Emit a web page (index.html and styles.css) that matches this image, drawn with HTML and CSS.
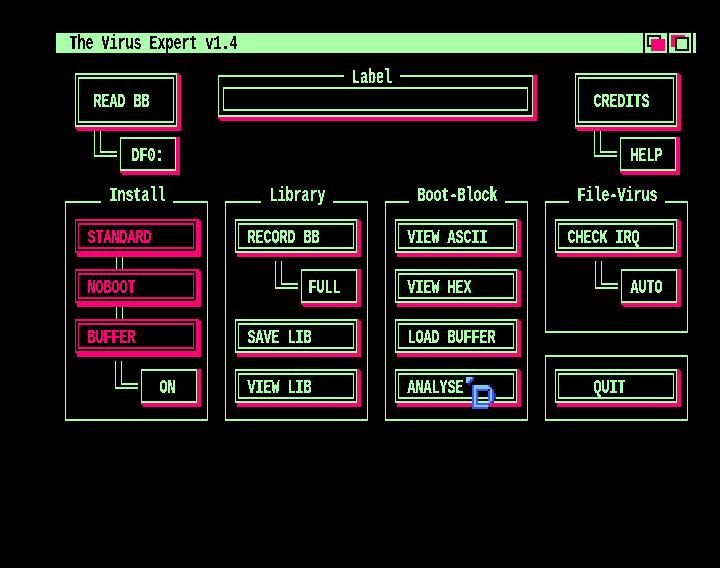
FILE: index.html
```html
<!DOCTYPE html>
<html lang="en">
<head>
<meta charset="utf-8">
<title>The Virus Expert v1.4</title>
<link rel="stylesheet" href="styles.css">
</head>
<body>
<svg class="defs" width="0" height="0" aria-hidden="true">
  <filter id="crisp" x="-5%" y="-50%" width="110%" height="200%">
    <feComponentTransfer><feFuncA type="discrete" tableValues="0 0 1 1 1"/></feComponentTransfer>
  </filter>
</svg>
<div class="screen">
  <header class="titlebar">
    <span class="text">The Virus Expert v1.4</span>
    <svg class="gadgets" width="53" height="20" viewBox="0 0 53 20" shape-rendering="crispEdges">
      <path fill="#000" d="M0 0h2v20H0zM24 0h2v20h-2zM48 0h2v20h-2z"/>
      <path fill="#000" fill-rule="evenodd" d="M4 2h14v12H4zM6 4v8h10V4z"/>
      <path fill="#ff0077" d="M8 6h14v12H8zM28 2h14v12H28z"/>
      <path fill="#000" d="M32 4h14v14H32z"/>
      <path fill="#aaffaa" d="M34 6h10v10H34z"/>
    </svg>
  </header>

  <section class="top">
    <div class="group">
      <div class="btn large"><div class="inner"><span class="text">READ BB</span></div></div>
      <div class="branch"><i class="elbow"></i><div class="small df"><span class="text">DF0:</span></div></div>
    </div>
    <div class="label">
      <div class="head"><i></i><span class="text">Label</span><i></i></div>
      <div class="field"></div>
    </div>
    <div class="group">
      <div class="btn large"><div class="inner"><span class="text">CREDITS</span></div></div>
      <div class="branch"><i class="elbow"></i><div class="small help"><span class="text">HELP</span></div></div>
    </div>
  </section>

  <main class="panels">
    <section class="panel">
      <div class="head"><i></i><span class="text">Install</span><i></i></div>
      <div class="row"><div class="btn off"><div class="inner"><span class="text">STANDARD</span></div></div><i class="link"></i></div>
      <div class="row"><div class="btn off"><div class="inner"><span class="text">NOBOOT</span></div></div><i class="link"></i></div>
      <div class="row"><div class="btn off"><div class="inner"><span class="text">BUFFER</span></div></div></div>
      <div class="row fork"><i class="elbow"></i><div class="small on"><span class="text">ON</span></div></div>
    </section>
    <section class="panel">
      <div class="head"><i></i><span class="text">Library</span><i></i></div>
      <div class="row"><div class="btn"><div class="inner"><span class="text">RECORD BB</span></div></div></div>
      <div class="row fork"><i class="elbow"></i><div class="small full"><span class="text">FULL</span></div></div>
      <div class="row"><div class="btn"><div class="inner"><span class="text">SAVE LIB</span></div></div></div>
      <div class="row"><div class="btn"><div class="inner"><span class="text">VIEW LIB</span></div></div></div>
    </section>
    <section class="panel wide">
      <div class="head"><i></i><span class="text">Boot-Block</span><i></i></div>
      <div class="row"><div class="btn"><div class="inner"><span class="text">VIEW ASCII</span></div></div></div>
      <div class="row"><div class="btn"><div class="inner"><span class="text">VIEW HEX</span></div></div></div>
      <div class="row"><div class="btn"><div class="inner"><span class="text">LOAD BUFFER</span></div></div></div>
      <div class="row"><div class="btn"><div class="inner"><span class="text">ANALYSE</span></div></div></div>
    </section>
    <div class="column">
      <section class="panel wide short">
        <div class="head"><i></i><span class="text">File-Virus</span><i></i></div>
        <div class="row"><div class="btn"><div class="inner"><span class="text">CHECK IRQ</span></div></div></div>
        <div class="row fork"><i class="elbow"></i><div class="small auto"><span class="text">AUTO</span></div></div>
      </section>
      <section class="panel exit">
        <div class="btn quit"><div class="inner"><span class="text">QUIT</span></div></div>
      </section>
    </div>
  </main>

  <svg class="pointer" width="30" height="32" viewBox="0 0 15 16" shape-rendering="crispEdges">
    <path fill="#77ccff" d="M0 0h3v1H0zM0 1h2v1H0zM0 2h1v1H0zM4 4h7v1H4zM4 5h7v1H4zM11 5h1v1h-1zM12 6h1v3h-1zM12 9h1v3h-1zM11 12h1v1h-1zM4 14h7v1H4zM4 6h1v8H4z"/>
    <path fill="#4455ff" d="M3 0h1v1H3zM2 1h1v1H2zM1 2h1v1H1zM3 4h1v12H3zM11 4h1v1h-1zM12 5h1v1h-1zM5 6h6v1H5zM5 7h1v6H5zM5 13h6v1H5zM11 7h1v5h-1zM13 7h1v5h-1zM12 12h1v2h-1zM4 15h7v1H4zM11 14h1v1h-1z"/>
    <path fill="#2233bb" d="M3 1h1v1H3zM2 2h1v1H2zM1 3h1v1H1zM13 6h1v1h-1zM14 8h1v3h-1zM13 12h1v1h-1z"/>
  </svg>
</div>
</body>
</html>
```

FILE: styles.css
```css
:root {
  --green: #aaffaa;
  --pink: #ff0077;
}

* { box-sizing: border-box; }

body {
  margin: 0;
  background: #000;
  color: var(--green);
  overflow: hidden;
}

.defs { position: absolute; }

.screen {
  position: relative;
  width: 720px;
  height: 568px;
  padding: 33px 24px 0 56px;
}

.text {
  display: block;
  flex: none;
  height: 14px;
  font: bold 13.33px/14px "Liberation Mono", monospace;
  white-space: pre;
  transform-origin: 0 10.5px;
  transform: translate(0.5px, 4.5px) scaleY(1.55);
  filter: url(#crisp);
}

.titlebar {
  display: flex;
  justify-content: space-between;
  height: 20px;
  padding: 2px 0 0 13px;
  background: var(--green);
  color: #000;
}

.gadgets { display: block; margin-top: -2px; }

.top {
  display: flex;
  height: 128px;
  padding: 20px 0 0 19px;
}

.group { width: 102px; }

.btn {
  width: 122px;
  height: 34px;
  padding: 2px;
  border: solid var(--green);
  border-width: 2px 1px;
  box-shadow: 2px 0 var(--pink), 2px 2px var(--pink), 3px 3px 0 1px var(--pink);
}

.btn .inner {
  height: 100%;
  padding: 4px 0 0 8px;
  border: solid var(--green);
  border-width: 2px 1px;
}

.btn.large {
  width: 102px;
  height: 54px;
  box-shadow: 1px 1px 0 1px var(--pink), 3px 3px 0 1px var(--pink);
}

.btn.large .inner { padding: 14px 0 0 14px; }

.btn.off,
.btn.off .inner { border-color: var(--pink); color: var(--pink); }

.btn.quit .inner { padding-left: 34px; }

.small {
  flex: none;
  width: 56px;
  height: 34px;
  padding-top: 8px;
  border: solid var(--green);
  border-width: 2px 1px;
  box-shadow: 2px 0 var(--pink), 4px 0 var(--pink), 0 2px var(--pink),
    2px 2px var(--pink), 2px 4px var(--pink), 4px 4px var(--pink);
}

.df { padding-left: 10px; }
.help { padding-left: 9px; }
.full { padding-left: 6px; }
.auto { padding-left: 8px; }
.on { padding-left: 17px; }

.elbow {
  flex: none;
  display: block;
  width: 23px;
  height: 28px;
  margin-right: 3px;
  border: solid var(--green);
  border-width: 0 0 2px 1px;
  padding: 0 0 4px 5px;
}

.elbow::before {
  content: "";
  display: block;
  height: 100%;
  border: solid var(--green);
  border-width: 0 0 2px 1px;
}

.branch { display: flex; padding: 4px 0 0 19px; }
.branch .elbow { height: 26px; }
.branch .small { margin-top: 6px; }

.head {
  display: flex;
  justify-content: space-between;
  height: 2px;
}

.head i { width: 36px; background: var(--green); }
.head .text { margin-top: -14px; }

.label {
  width: 315px;
  height: 42px;
  margin: 2px 42px 0 41px;
  padding: 0 4px;
  border: solid var(--green);
  border-width: 0 1px 2px;
  box-shadow: 2px 0 var(--pink), 4px 0 var(--pink), 0 2px var(--pink),
    2px 2px var(--pink), 2px 4px var(--pink), 4px 4px var(--pink);
}

.label .head { margin: 0 -5px; }
.label .head i { width: 126px; }
.label .head i:last-child { width: 133px; }
.label .head .text { margin: -6px 1px 0 0; }

.field {
  height: 24px;
  margin-top: 10px;
  border: solid var(--green);
  border-width: 2px 1px;
}

.panels {
  display: flex;
  gap: 17px;
  margin: 20px 0 0 9px;
}

.panel {
  width: 143px;
  height: 220px;
  padding-left: 9px;
  border: solid var(--green);
  border-width: 0 1px 2px;
}

.panel .head { margin: 0 -1px 16px -10px; }
.panel .head i { width: 36px; }
.panel .head i:last-child { width: 35px; }
.panel.wide .head i { width: 24px; }
.panel.wide .head i:last-child { width: 23px; }
.panel.short { height: 132px; }
.panel.exit { height: 66px; margin-top: 22px; padding-top: 12px; border-top-width: 2px; }

.row { height: 50px; }
.fork { display: flex; padding-left: 40px; }
.fork .elbow { margin-top: -8px; }

.link {
  display: block;
  width: 7px;
  height: 12px;
  margin: 4px 0 0 41px;
  border: solid var(--green);
  border-width: 0 1px;
}

.pointer { position: absolute; left: 466px; top: 377px; }
```
